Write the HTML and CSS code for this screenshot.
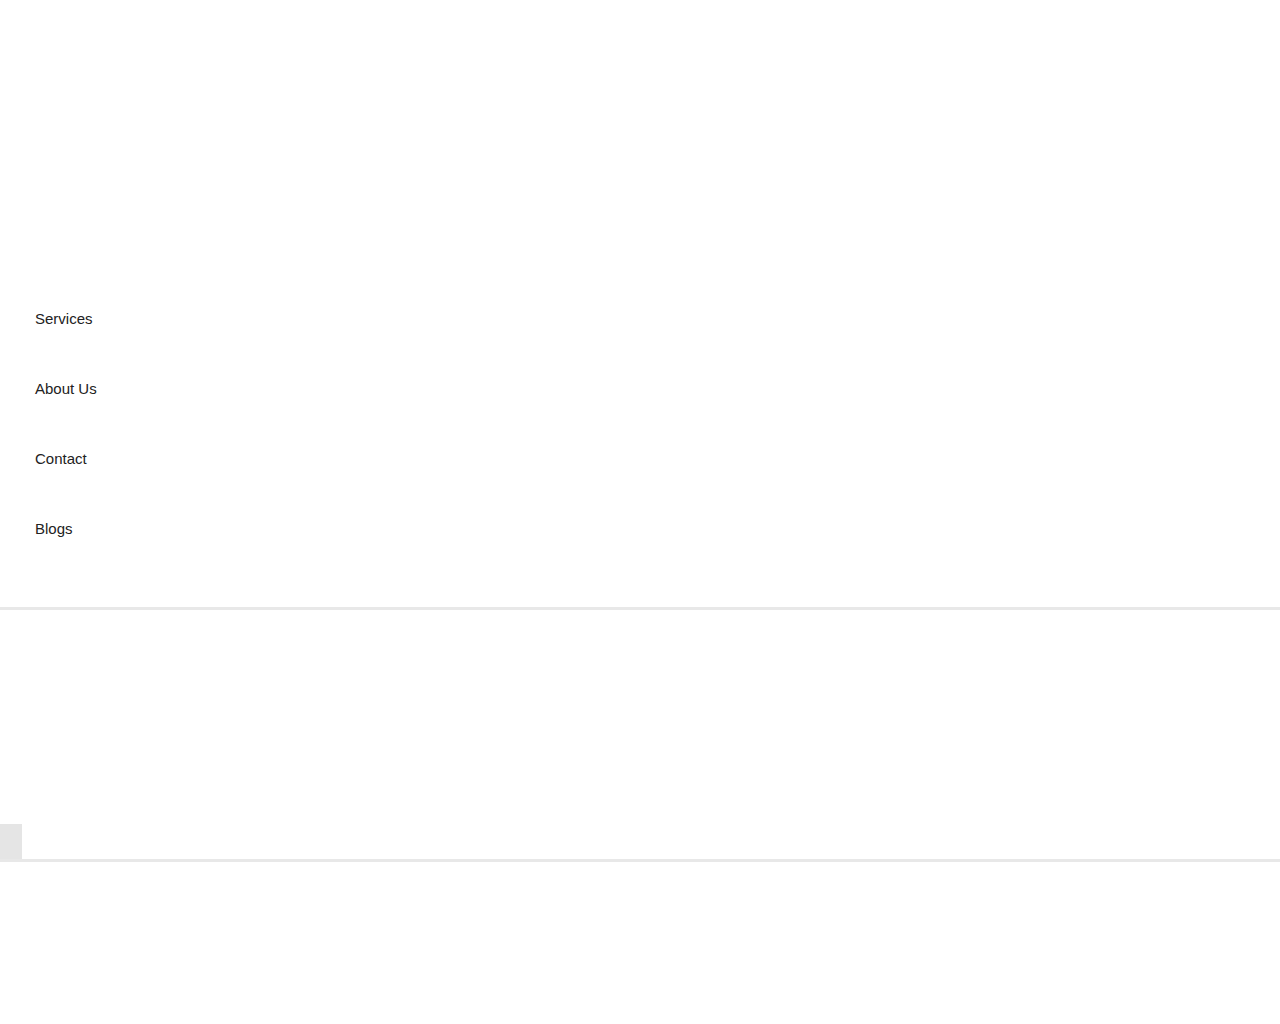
FILE: index.html
```html
<!DOCTYPE html>
<html>
<head>
<meta charset="utf-8">
<link rel="stylesheet" href="styles.css">
</head>
<body>
<header class="top"></header>
<nav class="menu">
  <a class="menu-item" href="#">Services</a>
  <a class="menu-item" href="#">About Us</a>
  <a class="menu-item" href="#">Contact</a>
  <a class="menu-item" href="#">Blogs</a>
</nav>
<section class="panel">
  <div class="tab"></div>
</section>
</body>
</html>
```
FILE: styles.css
```css
html, body {
  margin: 0;
  padding: 0;
  background: #fff;
  font-family: "Liberation Sans", Arial, sans-serif;
}
.top {
  height: 284px;
}
.menu {
  display: flex;
  flex-direction: column;
  padding-bottom: 43px;
  border-bottom: 3px solid #e8e8e8;
}
.menu-item {
  display: block;
  padding: 27px 35px;
  line-height: 16px;
  font-size: 15px;
  color: #222;
  text-decoration: none;
}
.panel {
  height: 249px;
  display: flex;
  align-items: flex-end;
  border-bottom: 3px solid #e8e8e8;
}
.tab {
  width: 22px;
  height: 35px;
  background: #e5e5e5;
}
```
